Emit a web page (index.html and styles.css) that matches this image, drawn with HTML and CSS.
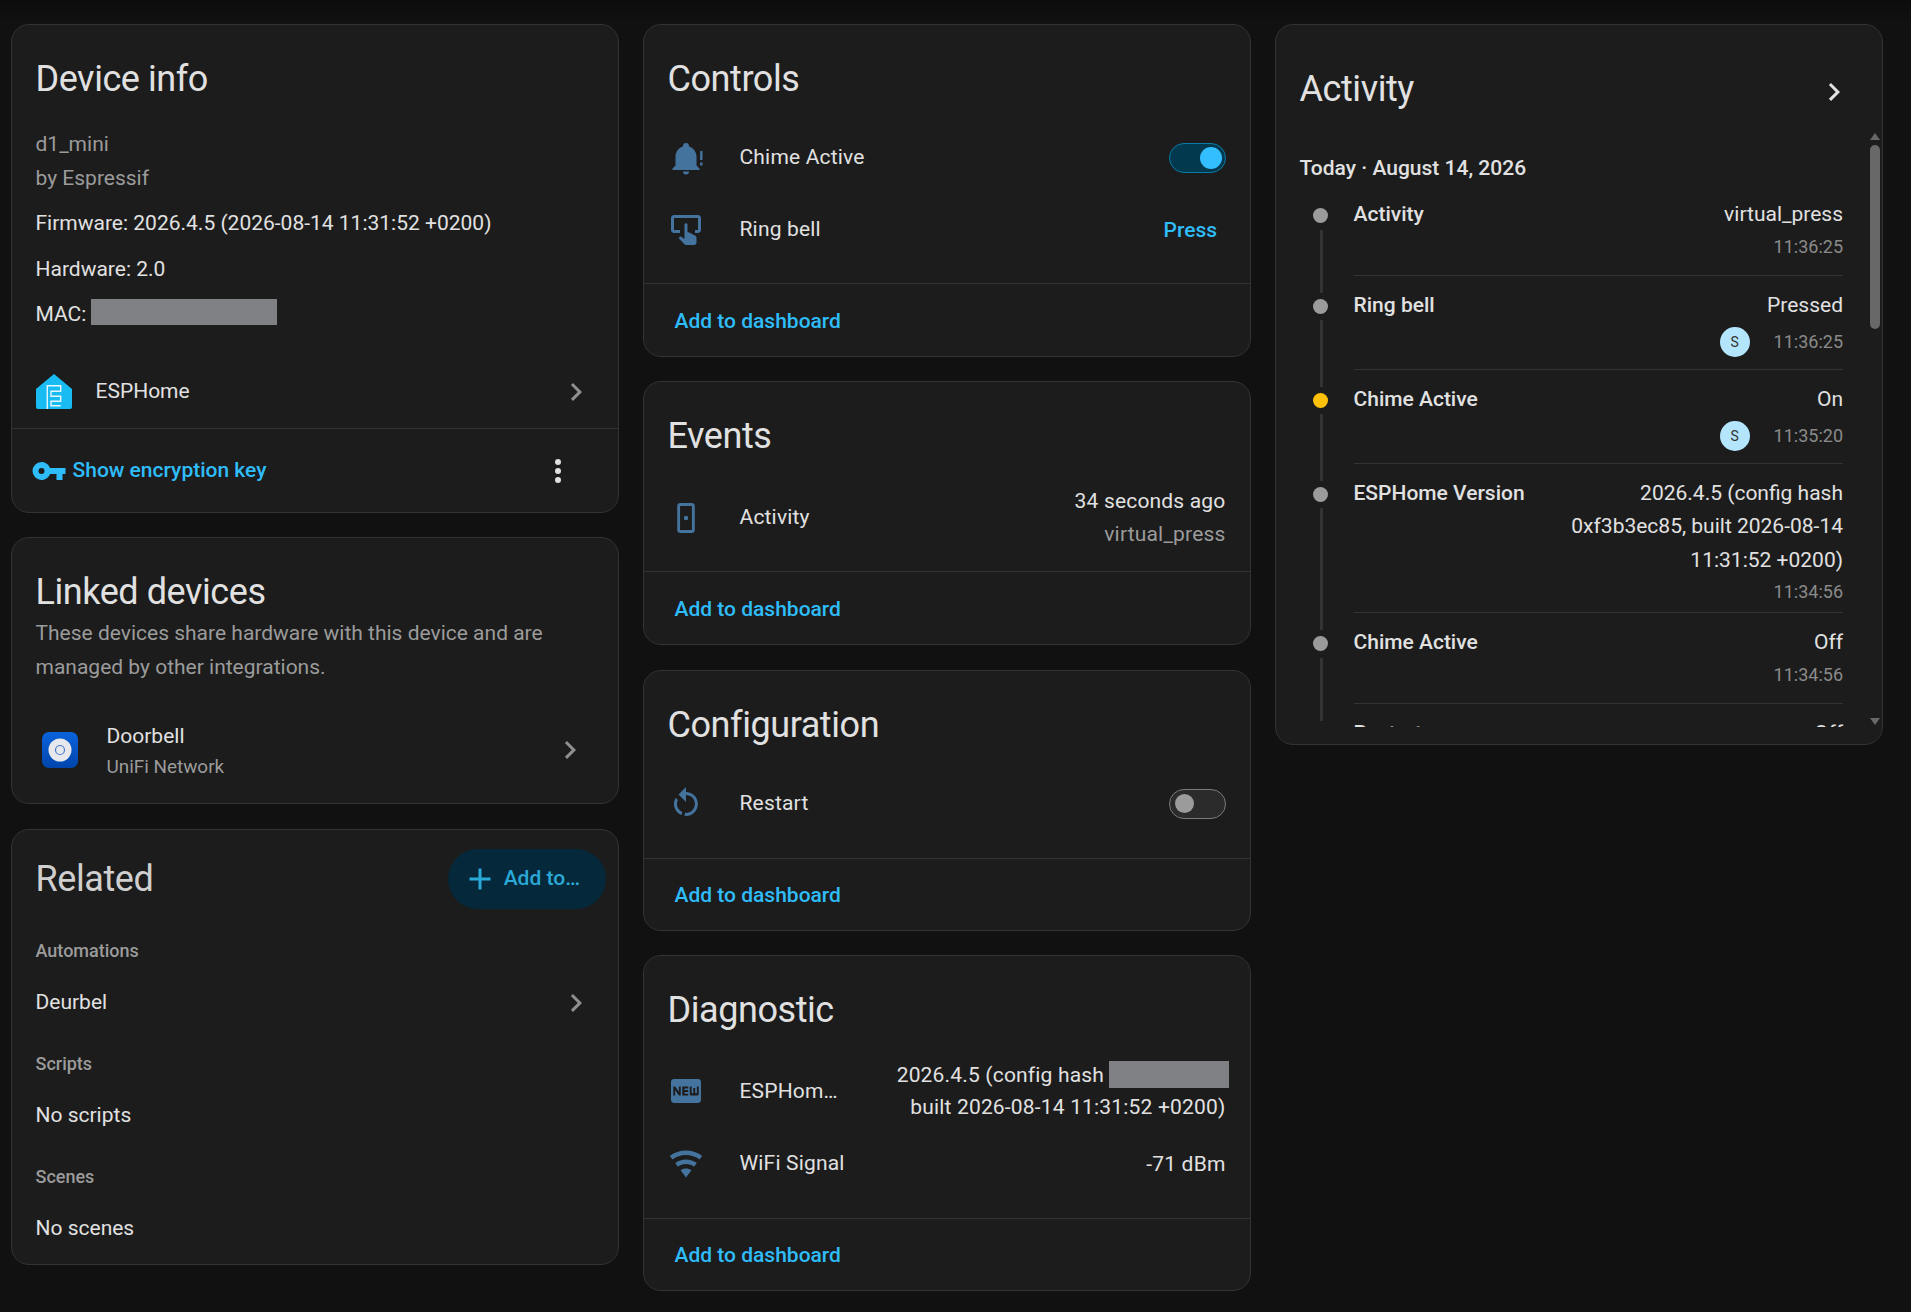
FILE: index.html
```html
<!DOCTYPE html>
<html lang="en">
<head>
<meta charset="utf-8">
<title>Device</title>
<link rel="stylesheet" href="styles.css">
</head>
<body>
<main class="page">
  <section class="col">
    <article class="card">
      <h2 class="hd">Device info</h2>
      <div class="info">
        <div class="muted">d1_mini</div>
        <div class="muted">by Espressif</div>
        <p class="fact">Firmware: 2026.4.5 (2026-08-14 11:31:52 +0200)</p>
        <p class="fact">Hardware: 2.0</p>
        <p class="fact fact-mac">MAC: <span class="redact mac"></span></p>
      </div>
      <div class="link-row">
        <svg class="ic" viewBox="0 0 36 36"><path d="M18 0 L36 15 V33 Q36 35 34 35 H2 Q0 35 0 33 V15 Z" fill="#18bcf2"/><path d="M11.3 35 V11.7 H24.7 V17.3 H15 V22.3 H24.7 V27.3 H15 V31.7 H24.7" fill="none" stroke="#e4f7fe" stroke-width="1.4"/></svg>
        <span class="grow">ESPHome</span>
        <svg class="ic chev" viewBox="0 0 24 24"><path d="M8.59,16.58L13.17,12L8.59,7.41L10,6L16,12L10,18L8.59,16.58Z"/></svg>
      </div>
      <div class="actions">
        <svg class="ic key" viewBox="0 0 24 24"><path d="M7,14A2,2 0 0,1 5,12A2,2 0 0,1 7,10A2,2 0 0,1 9,12A2,2 0 0,1 7,14M12.65,10C11.83,7.67 9.61,6 7,6A6,6 0 0,0 1,12A6,6 0 0,0 7,18C9.61,18 11.83,16.33 12.65,14H17V18H21V14H23V10H12.65Z"/></svg>
        <span class="btn grow">Show encryption key</span>
        <svg class="ic dots" viewBox="0 0 24 24"><path d="M12,16A2,2 0 0,1 14,18A2,2 0 0,1 12,20A2,2 0 0,1 10,18A2,2 0 0,1 12,16M12,10A2,2 0 0,1 14,12A2,2 0 0,1 12,14A2,2 0 0,1 10,12A2,2 0 0,1 12,10M12,4A2,2 0 0,1 14,6A2,2 0 0,1 12,8A2,2 0 0,1 10,6A2,2 0 0,1 12,4Z"/></svg>
      </div>
    </article>

    <article class="card">
      <h2 class="hd">Linked devices</h2>
      <p class="blurb">These devices share hardware with this device and are managed by other integrations.</p>
      <div class="linked-row">
        <svg class="ic" viewBox="0 0 36 36"><defs><linearGradient id="uf" x1="0" y1="0" x2="0" y2="1"><stop offset="0" stop-color="#0a63dc"/><stop offset="1" stop-color="#0045ad"/></linearGradient></defs><rect width="36" height="36" rx="7" fill="url(#uf)"/><circle cx="18" cy="18" r="11.5" fill="#e6e8ee"/><circle cx="18" cy="18" r="4.5" fill="none" stroke="#4a7bc8" stroke-width="1.2"/></svg>
        <div class="grow">
          <div class="linked-name">Doorbell</div>
          <div class="linked-sub">UniFi Network</div>
        </div>
        <svg class="ic chev" viewBox="0 0 24 24"><path d="M8.59,16.58L13.17,12L8.59,7.41L10,6L16,12L10,18L8.59,16.58Z"/></svg>
      </div>
    </article>

    <article class="card">
      <div class="related-top">
        <h2 class="hd-related">Related</h2>
        <div class="add-to">
          <svg class="ic plus" viewBox="0 0 24 24"><path d="M19,13H13V19H11V13H5V11H11V5H13V11H19V13Z"/></svg>
          <span>Add to…</span>
        </div>
      </div>
      <div class="related-list">
        <div class="rel-head">Automations</div>
        <div class="rel-item"><span class="grow">Deurbel</span><svg class="ic chev" viewBox="0 0 24 24"><path d="M8.59,16.58L13.17,12L8.59,7.41L10,6L16,12L10,18L8.59,16.58Z"/></svg></div>
        <div class="rel-head">Scripts</div>
        <div class="rel-item">No scripts</div>
        <div class="rel-head">Scenes</div>
        <div class="rel-item">No scenes</div>
      </div>
    </article>
  </section>

  <section class="col">
    <article class="card">
      <h2 class="hd">Controls</h2>
      <div class="rows compact">
        <div class="row">
          <svg class="ic state" viewBox="0 0 24 24"><path d="M21,19V20H3V19L5,17V11C5,7.9 7.03,5.17 10,4.29C10,4.19 10,4.1 10,4A2,2 0 0,1 12,2A2,2 0 0,1 14,4C14,4.1 14,4.19 14,4.29C16.97,5.17 19,7.9 19,11V17L21,19M14,21A2,2 0 0,1 12,23A2,2 0 0,1 10,21"/><path d="M21.4 7.4H23V13.4H21.4ZM21.4 15H23V17H21.4Z"/></svg>
          <span class="label">Chime Active</span>
          <span class="toggle on"><i class="knob"></i></span>
        </div>
        <div class="row">
          <svg class="ic state" viewBox="0 0 24 24"><path d="M20 2H4C2.9 2 2 2.9 2 4V12C2 13.1 2.9 14 4 14H8V12H4V4H20V12H18V14H20C21.1 14 22 13.1 22 12V4C22 2.9 21.1 2 20 2Z"/><path d="M19 20.5C18.97 21.32 18.32 21.97 17.5 22H12C11.62 22 11.26 21.85 11 21.57L7 17.37L7.74 16.6C7.93 16.39 8.2 16.28 8.5 16.28H8.7L11 18V8.5C11 7.95 11.45 7.5 12 7.5S13 7.95 13 8.5V13.47L14.21 13.6L18.15 15.79C18.68 16.03 19 16.56 19 17.14V20.5Z"/></svg>
          <span class="label">Ring bell</span>
          <span class="press">Press</span>
        </div>
      </div>
      <div class="foot"><span class="btn">Add to dashboard</span></div>
    </article>

    <article class="card">
      <h2 class="hd">Events</h2>
      <div class="rows compact">
        <div class="row tall">
          <svg class="ic state" viewBox="0 0 24 24"><rect x="7.1" y="3" width="9.8" height="18" rx="1.2" fill="none" stroke="#44739e" stroke-width="1.9"/><circle cx="12" cy="12" r="1.5"/></svg>
          <span class="label">Activity</span>
          <div class="value"><div>34 seconds ago</div><div class="muted">virtual_press</div></div>
        </div>
      </div>
      <div class="foot"><span class="btn">Add to dashboard</span></div>
    </article>

    <article class="card">
      <h2 class="hd">Configuration</h2>
      <div class="rows">
        <div class="row">
          <svg class="ic state" viewBox="0 0 24 24"><path d="M12,4C14.1,4 16.1,4.8 17.6,6.3C20.7,9.4 20.7,14.5 17.6,17.6C15.8,19.5 13.3,20.2 10.9,19.9L11.4,17.9C13.1,18.1 14.9,17.5 16.2,16.2C18.5,13.9 18.5,10.1 16.2,7.7C15.1,6.6 13.5,6 12,6V10.6L7,5.6L12,0.6V4M6.3,17.6C3.7,15 3.3,11 5.1,7.9L6.6,9.4C5.5,11.6 5.9,14.4 7.8,16.2C8.3,16.7 8.9,17.1 9.6,17.4L9,19.4C8,19 7.1,18.4 6.3,17.6Z"/></svg>
          <span class="label">Restart</span>
          <span class="toggle"><i class="knob"></i></span>
        </div>
      </div>
      <div class="foot"><span class="btn">Add to dashboard</span></div>
    </article>

    <article class="card">
      <h2 class="hd">Diagnostic</h2>
      <div class="rows">
        <div class="row tall">
          <svg class="ic state" viewBox="0 0 24 24"><path d="M20,4C21.11,4 22,4.89 22,6V18C22,19.11 21.11,20 20,20H4C2.89,20 2,19.11 2,18V6C2,4.89 2.89,4 4,4H20M8.5,15V9H7.25V12.5L4.75,9H3.5V15H4.75V11.5L7.3,15H8.5M13.5,10.26V9H9.5V15H13.5V13.75H11V12.64H13.5V11.38H11V10.26H13.5M20.5,14V9H19.25V13.5H18.13V10H16.88V13.5H15.75V9H14.5V14A1,1 0 0,0 15.5,15H19.5A1,1 0 0,0 20.5,14Z"/></svg>
          <span class="label clip">ESPHome Version</span>
          <div class="value"><div>2026.4.5 (config hash <span class="redact hash"></span></div><div>built 2026-08-14 11:31:52 +0200)</div></div>
        </div>
        <div class="row">
          <svg class="ic state" viewBox="0 0 24 24"><path d="M12,21L15.6,16.2C14.6,15.45 13.35,15 12,15C10.65,15 9.4,15.45 8.4,16.2L12,21M12,3C7.95,3 4.21,4.34 1.2,6.6L3,9C5.5,7.12 8.62,6 12,6C15.38,6 18.5,7.12 21,9L22.8,6.6C19.79,4.34 16.05,3 12,3M12,9C9.3,9 6.81,9.89 4.8,11.4L6.6,13.8C8.1,12.67 9.97,12 12,12C14.03,12 15.9,12.67 17.4,13.8L19.2,11.4C17.19,9.89 14.7,9 12,9Z"/></svg>
          <span class="label">WiFi Signal</span>
          <div class="value">-71 dBm</div>
        </div>
      </div>
      <div class="foot"><span class="btn">Add to dashboard</span></div>
    </article>
  </section>

  <section class="col">
    <article class="card activity">
      <div class="activity-top">
        <h2 class="hd-activity">Activity</h2>
        <svg class="ic chev-light" viewBox="0 0 24 24"><path d="M8.59,16.58L13.17,12L8.59,7.41L10,6L16,12L10,18L8.59,16.58Z"/></svg>
      </div>
      <div class="log">
        <h3 class="day">Today · August 14, 2026</h3>

        <div class="entry">
          <div class="rail"><i class="dot"></i><i class="line"></i></div>
          <div class="entry-body">
            <div class="entry-main"><span class="entry-title">Activity</span><span class="entry-value">virtual_press</span></div>
            <div class="entry-sub"><span class="time">11:36:25</span></div>
          </div>
        </div>

        <div class="entry">
          <div class="rail"><i class="dot"></i><i class="line"></i></div>
          <div class="entry-body by-user">
            <div class="entry-main"><span class="entry-title">Ring bell</span><span class="entry-value">Pressed</span></div>
            <div class="entry-sub"><span class="avatar">S</span><span class="time">11:36:25</span></div>
          </div>
        </div>

        <div class="entry">
          <div class="rail"><i class="dot dot-on"></i><i class="line"></i></div>
          <div class="entry-body by-user">
            <div class="entry-main"><span class="entry-title">Chime Active</span><span class="entry-value">On</span></div>
            <div class="entry-sub"><span class="avatar">S</span><span class="time">11:35:20</span></div>
          </div>
        </div>

        <div class="entry">
          <div class="rail"><i class="dot"></i><i class="line"></i></div>
          <div class="entry-body">
            <div class="entry-main"><span class="entry-title">ESPHome Version</span><span class="entry-value">2026.4.5 (config hash 0xf3b3ec85, built 2026-08-14 11:31:52 +0200)</span></div>
            <div class="entry-sub"><span class="time">11:34:56</span></div>
          </div>
        </div>

        <div class="entry">
          <div class="rail"><i class="dot"></i><i class="line"></i></div>
          <div class="entry-body">
            <div class="entry-main"><span class="entry-title">Chime Active</span><span class="entry-value">Off</span></div>
            <div class="entry-sub"><span class="time">11:34:56</span></div>
          </div>
        </div>

        <div class="entry">
          <div class="rail"><i class="dot"></i><i class="line"></i></div>
          <div class="entry-body">
            <div class="entry-main"><span class="entry-title">Restart</span><span class="entry-value">Off</span></div>
            <div class="entry-sub"><span class="time">11:34:56</span></div>
          </div>
        </div>
      </div>
      <div class="scrollbar">
        <i class="arrow-up"></i>
        <i class="thumb"></i>
        <i class="arrow-down"></i>
      </div>
    </article>
  </section>
</main>
</body>
</html>
```

FILE: styles.css
```css
* { box-sizing: border-box; }
html, body { margin: 0; padding: 0; }
body {
  min-height: 1312px;
  background: linear-gradient(#0c0c0c, #111111 24px);
  color: #e1e1e1;
  font-family: Roboto, "Liberation Sans", sans-serif;
  font-size: 21px;
  line-height: 33.5px;
}
.page {
  display: grid;
  grid-template-columns: repeat(3, 608px);
  column-gap: 24px;
  align-items: start;
  padding: 24px 0 0 11px;
}
.col { display: flex; flex-direction: column; gap: 24.33px; }
.card {
  position: relative;
  background: #1c1c1c;
  border: 1px solid #333333;
  border-radius: 18px;
}
h2, h3, p { margin: 0; font-weight: 400; }
.hd, .hd-related, .hd-activity {
  font-size: 36px;
  line-height: 48px;
  letter-spacing: -0.012em;
}
.hd { padding: 30px 24px 0 23.5px; }
.ic { display: block; width: 36px; height: 36px; flex: none; }
.grow { flex: 1; min-width: 0; }
.muted { color: #9b9b9b; }
.chev { fill: #8f8f8f; }
.chev-light { fill: #e1e1e1; }
.btn { color: #2fbdfa; font-weight: 500; }

/* device info */
.info { padding: 25px 24px 0 23.5px; }
.fact { margin-top: 12.5px; }
.muted + .fact { margin-top: 11.5px; }
.fact-mac { margin-top: 11.5px; }
.redact { display: inline-block; background: #808184; }
.mac { width: 186px; height: 26px; margin-left: -1px; vertical-align: -4px; }
.hash { width: 120px; height: 27px; margin-right: -4px; vertical-align: -6px; }
.link-row {
  display: flex;
  align-items: center;
  gap: 23.5px;
  height: 72px;
  margin-top: 25px;
  padding: 0 24px;
}
.actions {
  display: flex;
  align-items: center;
  gap: 5.5px;
  height: 84px;
  padding: 0 42px 0 19px;
  border-top: 1px solid #333333;
}
.key { fill: #2fbdfa; }
.dots { fill: #e1e1e1; }

/* linked */
.blurb { padding: 0 24px 0 23.5px; color: #9b9b9b; line-height: 34px; }
.linked-row {
  display: flex;
  align-items: center;
  gap: 28.5px;
  padding: 37px 30px 21px;
}
.linked-row .ic { margin-top: -3px; }
.linked-name { line-height: 30px; }
.linked-sub { font-size: 18.9px; line-height: 31px; color: #9b9b9b; }

/* related */
.related-top {
  display: flex;
  align-items: center;
  justify-content: space-between;
  padding: 19px 12px 0 23.5px;
}
.hd-related { color: #cfcfcf; }
.add-to {
  display: flex;
  align-items: center;
  gap: 6px;
  height: 60px;
  padding: 0 26px 0 14px;
  border-radius: 30px;
  background: #05293a;
  color: #2aa9d8;
  font-weight: 500;
}
.plus { fill: #2aa9d8; }
.related-list { padding-top: 16.5px; }
.rel-head {
  padding: 11px 24px 0 23.5px;
  font-size: 18px;
  line-height: 30px;
  font-weight: 500;
  color: #9b9b9b;
}
.rel-item {
  display: flex;
  align-items: center;
  height: 72px;
  padding: 2px 24px 0 23.5px;
}

/* entity rows */
.rows { padding: 19px 24px 18px; letter-spacing: 0.18px; }
.rows.compact { padding-bottom: 17px; }
.row {
  display: flex;
  align-items: center;
  height: 72px;
}
.row.tall { height: 75px; padding-top: 2px; }
.state { fill: #44739e; }
.label { flex: 1; min-width: 0; margin-left: 35.5px; }
.label.clip {
  flex: none;
  width: 100px;
  margin-right: auto;
  white-space: nowrap;
  overflow: hidden;
  text-overflow: ellipsis;
}
.value { margin-left: auto; padding-right: 0.5px; line-height: 32.5px; text-align: right; white-space: nowrap; }
.press { padding: 2px 9px 0 0; color: #2fbdfa; font-weight: 500; letter-spacing: 0; }
.toggle {
  display: flex;
  align-items: center;
  width: 57px;
  height: 30px;
  padding: 0 5px;
  border: 1px solid #7a7a7a;
  border-radius: 15px;
  background: #2b2b2b;
}
.toggle .knob {
  display: block;
  width: 19px;
  height: 19px;
  border-radius: 50%;
  background: #9b9b9b;
}
.toggle.on { justify-content: flex-end; border-color: #087ba6; background: #03394f; padding: 0 3px; }
.toggle.on .knob { width: 22px; height: 22px; background: #33bfff; }
.foot {
  display: flex;
  align-items: center;
  height: 72px;
  padding: 3px 31px 0 30.5px;
  border-top: 1px solid #333333;
}
.rows.compact + .foot { height: 73px; }

/* activity */
.activity { height: 721px; }
.activity-top {
  display: flex;
  align-items: center;
  justify-content: space-between;
  padding: 39.5px 30px 0 23.5px;
}
.activity-top .ic { margin-top: 6px; }
.log { height: 599.5px; margin-top: 15px; padding: 24.5px 0 0 23.5px; overflow: hidden; }
.day { font-size: 21px; line-height: 33px; font-weight: 500; }
.entry { display: flex; }
.rail {
  display: flex;
  flex-direction: column;
  align-items: center;
  flex: none;
  width: 42px;
  margin-right: 12px;
}
.dot {
  display: block;
  flex: none;
  width: 15px;
  height: 15px;
  margin-top: 23px;
  border-radius: 50%;
  background: #9b9b9b;
}
.dot-on { background: #ffc107; }
.line {
  display: block;
  flex: 1;
  width: 3px;
  margin: 6.5px 0 -17px 2px;
  background: #333333;
}
.entry-body {
  flex: none;
  width: 489.5px;
  min-height: 90.6px;
  padding: 13px 0 7px 0;
  border-bottom: 1px solid #333333;
}
.entry-body.by-user { min-height: 94.2px; }
.entry-main { display: flex; justify-content: space-between; gap: 24px; }
.entry-title { flex: none; font-weight: 500; }
.entry-value { max-width: 300px; text-align: right; }
.entry-sub {
  display: flex;
  align-items: center;
  justify-content: flex-end;
  gap: 24px;
  min-height: 27px;
  padding-top: 1px;
}
.by-user .entry-sub { margin-top: 3.5px; }
.time { font-size: 18px; line-height: 27px; color: #8a8a8a; }
.avatar {
  display: flex;
  align-items: center;
  justify-content: center;
  width: 30px;
  height: 30px;
  border-radius: 50%;
  background: #b3e5fc;
  color: #333333;
  font-size: 14px;
  line-height: 30px;
}
.scrollbar {
  position: absolute;
  top: 108px;
  right: 2.5px;
  width: 10px;
  height: 592px;
  display: flex;
  flex-direction: column;
  align-items: center;
}
.arrow-up, .arrow-down {
  display: block;
  width: 0;
  height: 0;
  border-left: 5px solid transparent;
  border-right: 5px solid transparent;
}
.arrow-up { border-bottom: 7px solid #686868; }
.arrow-down { margin-top: auto; border-top: 7px solid #686868; }
.thumb {
  display: block;
  width: 10px;
  height: 184px;
  margin-top: 5px;
  border-radius: 5px;
  background: #686868;
}
```
